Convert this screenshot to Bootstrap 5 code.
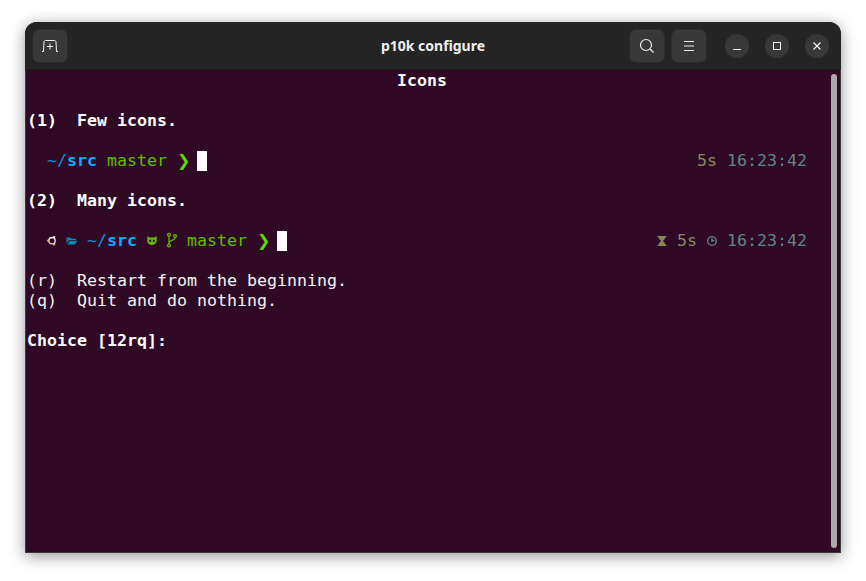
<!DOCTYPE html>
<html lang="en">
<head>
<meta charset="utf-8">
<title>p10k configure</title>
<link href="https://cdn.jsdelivr.net/npm/bootstrap@5.3.0/dist/css/bootstrap.min.css" rel="stylesheet">
<style>
html,body{height:100%;overflow:hidden}
body{background:#fff;padding:22px 25px 28px}
.term-window{width:816px;height:531px;border-radius:12px 12px 0 0;overflow:hidden;box-shadow:0 3px 16px rgba(0,0,0,.42);background:#222226;position:relative}
.term-head{height:48px;background:#242424;border-bottom:1px solid #1c1c1c;display:grid;grid-template-columns:1fr auto 1fr;align-items:center;padding:0 8px 0;flex:none}
.term-title{font-family:"Noto Sans",sans-serif;font-weight:700;font-size:14px;color:#efefef;line-height:20px}
.head-btn{width:34px;height:32px;background:#383838;border-radius:6px;box-shadow:0 0 0 1px #2c2c2c;color:#eee}
.win-btn{width:24px;height:24px;border-radius:50%;background:#383838}
.head-gap{margin-right:8px}
.win-gap{gap:16px;margin-left:19px;margin-right:4px}
.term-body{flex:1 1 auto;background:#300a24;border:solid #3c3c3c;border-width:0 1px 1px;padding:1px 0 0 1px;position:relative;font-family:"DejaVu Sans Mono",monospace;font-size:16.61px;line-height:20px;color:#f4f4f4}
.t-row{height:20px;width:790px;display:flex;justify-content:space-between;white-space:pre}
.t-row strong{color:#fff;font-weight:700}
.t-center{justify-content:center}
.cell{display:inline-block;width:10px;height:20px;vertical-align:top}
.cell svg{display:block;overflow:visible}
.c-path{color:#0a90de}
.c-src{color:#00afff;font-weight:700}
.c-git{color:#5fbc00}
.c-arrow{color:#5fd700;font-family:"DejaVu Sans",sans-serif;font-size:16px;display:inline-block;width:20px;font-weight:400}
.c-time{color:#5f8787}
.c-dur{color:#87875f}
.cursor-box{display:inline-block;width:10px;height:20px;background:#fff;vertical-align:top}
.r-end{padding-right:10px}
.scroll-thumb{position:absolute;right:3px;top:4px;bottom:4px;width:6px;border-radius:3px;background:#aaa8aa}
</style>
</head>
<body>
<div class="term-window d-flex flex-column">
  <header class="term-head">
    <div class="d-flex">
      <div class="head-btn d-flex align-items-center justify-content-center">
        <svg width="16" height="12" viewBox="0 0 16 12" fill="none" stroke="#eee" stroke-width="1"><path d="M0 11.500H1.500L2 2C2 1 2.500.5 3.500.5H12.500C13.500.5 14 1 14 2L14.500 11.500H16"/><path d="M8 3.500v6M5 6.500h6"/></svg>
      </div>
    </div>
    <div class="term-title">p10k configure</div>
    <div class="d-flex align-items-center justify-content-end">
      <div class="head-btn head-gap d-flex align-items-center justify-content-center">
        <svg width="16" height="16" viewBox="0 0 16 16" fill="none" stroke="#eee" stroke-width="1.200"><circle cx="7" cy="7" r="5.500"/><path d="M11 11l3.500 3.500"/></svg>
      </div>
      <div class="head-btn d-flex align-items-center justify-content-center">
        <svg width="12" height="10" viewBox="0 0 12 10" stroke="#eee" stroke-width="1"><path d="M1 .5h10M1 5h10M1 9.500h10"/></svg>
      </div>
      <div class="d-flex win-gap">
        <div class="win-btn d-flex align-items-center justify-content-center">
          <svg width="10" height="10" viewBox="0 0 10 10" stroke="#eee" stroke-width="1"><path d="M1 8.500h8"/></svg>
        </div>
        <div class="win-btn d-flex align-items-center justify-content-center">
          <svg width="10" height="10" viewBox="0 0 10 10" fill="none" stroke="#eee" stroke-width="1"><rect x="1.500" y="1.500" width="7" height="7"/></svg>
        </div>
        <div class="win-btn d-flex align-items-center justify-content-center">
          <svg width="10" height="10" viewBox="0 0 10 10" stroke="#eee" stroke-width="1.300"><path d="M1.500 1.500l7 7M8.500 1.500l-7 7"/></svg>
        </div>
      </div>
    </div>
  </header>
  <main class="term-body">
    <div class="t-row t-center"><strong>Icons</strong></div>
    <div class="t-row"></div>
    <div class="t-row"><strong>(1)  Few icons.</strong></div>
    <div class="t-row"></div>
    <div class="t-row"><span>  <span class="c-path">~/</span><span class="c-src">src</span> <span class="c-git">master</span> <span class="c-arrow">❯</span><span class="cursor-box"></span></span><span class="r-end"><span class="c-dur">5s</span> <span class="c-time">16:23:42</span></span></div>
    <div class="t-row"></div>
    <div class="t-row"><strong>(2)  Many icons.</strong></div>
    <div class="t-row"></div>
    <div class="t-row"><span>  <span class="cell"><svg width="10" height="20" viewBox="0 0 10 20" fill="none"><circle cx="5" cy="9.700" r="3.200" stroke="#f2e8ee" stroke-width="1.300"/><circle cx="1.200" cy="9.700" r="1.100" fill="#f4b08a"/><circle cx="7.200" cy="6" r="1.100" fill="#fff"/><circle cx="7.200" cy="13.400" r="1.100" fill="#f4b08a"/></svg></span> <span class="cell"><svg width="10" height="20" viewBox="0 0 10 20" fill="#0087af"><path d="M-.5 6.500h3.800l1 1.200H9v1.300H2.200L-.5 12.500zM2.800 9.800H10.500L8 13.500H.2z"/></svg></span> <span class="c-path">~/</span><span class="c-src">src</span> <span class="cell"><svg width="10" height="20" viewBox="0 0 10 20"><path fill="#5fb800" d="M.4 5l2.200 1.400h4.800L9.600 5l.2 4.800c0 2.700-2.200 4.200-4.800 4.200S.2 12.500.2 9.800z"/><ellipse cx="3.200" cy="9.800" rx="1" ry="1.300" fill="#300a24"/><ellipse cx="6.800" cy="9.800" rx="1" ry="1.300" fill="#300a24"/></svg></span> <span class="cell"><svg width="10" height="20" viewBox="0 0 10 20" fill="none" stroke="#5fb800" stroke-width="1.300"><circle cx="2" cy="3.700" r="1.400"/><circle cx="2" cy="14.500" r="1.400"/><circle cx="8" cy="5" r="1.400"/><path d="M2 5.100V13.100M8 6.400C8 9.800 2 8.800 2 12"/></svg></span> <span class="c-git">master</span> <span class="c-arrow">❯</span><span class="cursor-box"></span></span><span class="r-end"><span class="cell"><svg width="10" height="20" viewBox="0 0 10 20" fill="#87875f"><path d="M.5 5h9v1.200H8.300c0 2.300-1.900 2.700-2.300 3.800.4 1.100 2.300 1.500 2.300 3.800h1.200V15h-9v-1.200h1.200c0-2.300 1.900-2.700 2.300-3.800-.4-1.100-2.300-1.500-2.300-3.800H.5z"/></svg></span> <span class="c-dur">5s</span> <span class="cell"><svg width="10" height="20" viewBox="0 0 10 20" fill="none" stroke="#5f8787" stroke-width="1.300"><circle cx="5" cy="10" r="4.300"/><path d="M5 7V10.200L7.500 9"/></svg></span> <span class="c-time">16:23:42</span></span></div>
    <div class="t-row"></div>
    <div class="t-row">(r)  Restart from the beginning.</div>
    <div class="t-row">(q)  Quit and do nothing.</div>
    <div class="t-row"></div>
    <div class="t-row"><strong>Choice [12rq]:</strong></div>
    <div class="scroll-thumb"></div>
  </main>
</div>
<script src="https://cdn.jsdelivr.net/npm/bootstrap@5.3.0/dist/js/bootstrap.bundle.min.js"></script>
</body>
</html>
